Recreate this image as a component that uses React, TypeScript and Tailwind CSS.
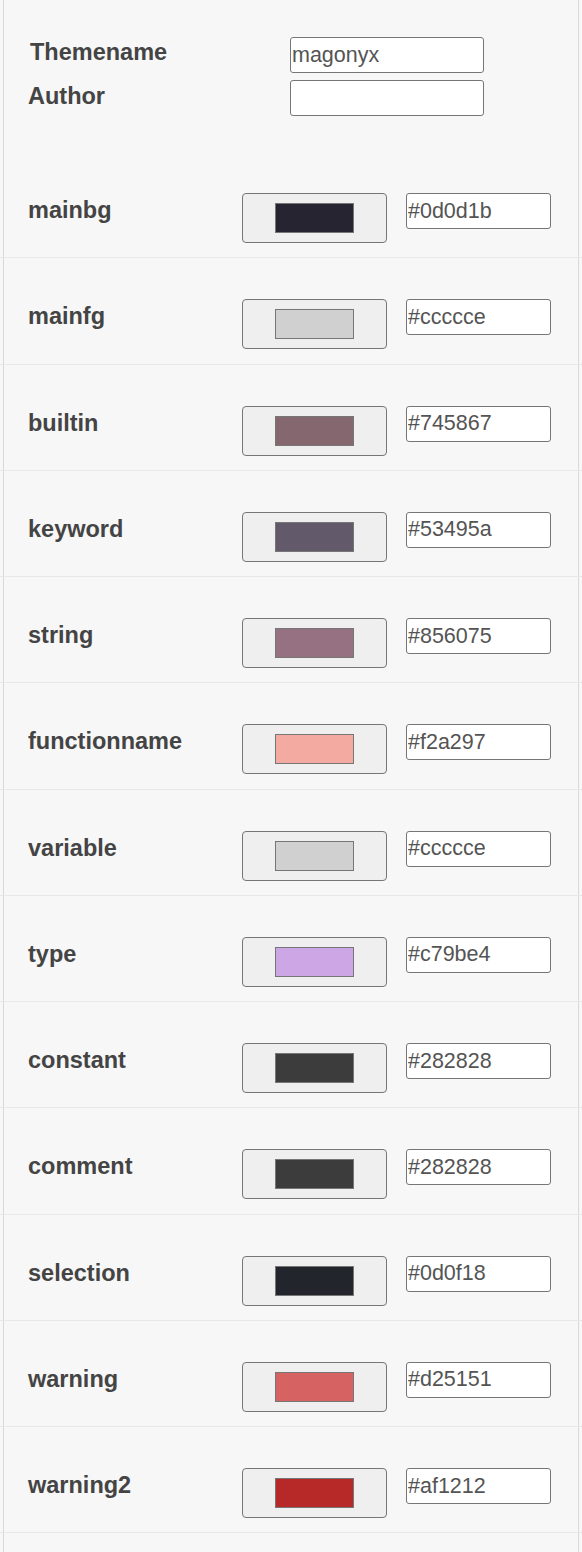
const colors: [string, string][] = [
  ["mainbg", "#0d0d1b"],
  ["mainfg", "#ccccce"],
  ["builtin", "#745867"],
  ["keyword", "#53495a"],
  ["string", "#856075"],
  ["functionname", "#f2a297"],
  ["variable", "#ccccce"],
  ["type", "#c79be4"],
  ["constant", "#282828"],
  ["comment", "#282828"],
  ["selection", "#0d0f18"],
  ["warning", "#d25151"],
  ["warning2", "#af1212"],
];

// swatch colours as they show in the picture
const swatches: Record<string, string> = {
  mainbg: "bg-[#262431]",
  mainfg: "bg-[#d0d0d1]",
  builtin: "bg-[#85676f]",
  keyword: "bg-[#625a6b]",
  string: "bg-[#957181]",
  functionname: "bg-[#f3aaa0]",
  variable: "bg-[#d0d0d1]",
  type: "bg-[#cda6e6]",
  constant: "bg-[#3c3c3c]",
  comment: "bg-[#3c3c3c]",
  selection: "bg-[#23252c]",
  warning: "bg-[#d76262]",
  warning2: "bg-[#b72828]",
};

function ColorRow({ name, hex }: { name: string; hex: string }) {
  return (
    <div className="-mx-[4px] flex h-[106.25px] items-start border-b border-[#e8e8e8] pl-[28px]">
      <label className="mt-[41px] w-[214px] text-[23.5px] font-bold text-[#444]">
        {name}
      </label>
      <div className="mt-[41px] flex h-[50px] w-[145px] items-center justify-center rounded-[4px] border border-[#767676] bg-[#efefef]">
        <div className={`h-[30px] w-[79px] border border-[#767676] ${swatches[name]}`}></div>
      </div>
      <input
        type="text"
        readOnly
        defaultValue={hex}
        className="mt-[41px] ml-[19px] h-[36px] w-[145px] rounded-[3px] border border-[#767676] bg-white px-[1px] text-[21.5px] text-[#545454] outline-none"
      />
    </div>
  );
}

export default function App() {
  return (
    <div className="min-h-[1552px] bg-[#f7f7f7] font-['Liberation_Sans',Arial,sans-serif]">
      <div className="mx-[3px] min-h-[1552px] border-x border-[#d8d8d8] pb-[20px]">
        <div className="h-[152px] pt-[37px] pl-[24px]">
          <div className="flex h-[36px] items-start">
            <label className="mt-[2px] w-[262px] pl-[2px] text-[23.5px] leading-[27px] font-bold text-[#444]">Themename</label>
            <input
              type="text"
              readOnly
              defaultValue="magonyx"
              className="h-[36px] w-[194px] rounded-[3px] border border-[#767676] bg-white px-[1px] text-[21.5px] text-[#545454] outline-none"
            />
          </div>
          <div className="mt-[7px] flex h-[36px] items-start">
            <label className="mt-[3px] w-[262px] text-[23.5px] leading-[27px] font-bold text-[#444]">Author</label>
            <input
              type="text"
              readOnly
              defaultValue=""
              className="h-[36px] w-[194px] rounded-[3px] border border-[#767676] bg-white px-[1px] text-[21.5px] text-[#545454] outline-none"
            />
          </div>
        </div>
        {colors.map(([name, hex]) => (
          <ColorRow key={name} name={name} hex={hex} />
        ))}
      </div>
    </div>
  );
}
